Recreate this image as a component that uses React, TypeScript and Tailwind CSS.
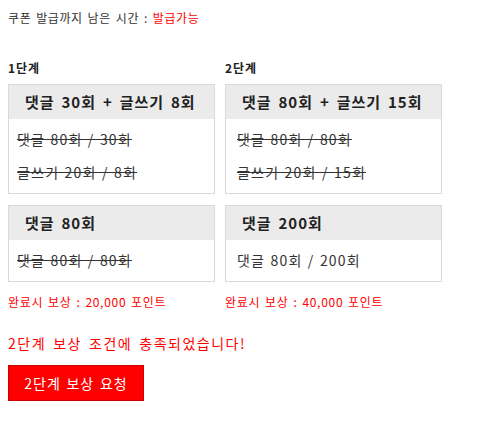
import React from "react";

const font = { fontFamily: '"Noto Sans CJK KR", "Noto Sans", sans-serif' };

function Card({
  title,
  lines,
  width,
  bodyPad,
  strike,
}: {
  title: string;
  lines: string[];
  width: string;
  bodyPad: string;
  strike: boolean[];
}) {
  return (
    <div className={`${width} border border-[#d9d9d9] bg-white`}>
      <div className="h-[34px] bg-[#ebebeb] pl-4 flex items-center text-[15px] font-bold text-[#222] tracking-[1px] [word-spacing:2.5px]">
        {title}
      </div>
      <div className={`py-[4px] ${bodyPad}`}>
        {lines.map((l, i) => (
          <div
            key={i}
            className={`h-[33px] flex items-center text-[14px] text-[#333] tracking-[1.2px] [word-spacing:1px] ${strike[i] ? "line-through" : ""}`}
          >
            {l}
          </div>
        ))}
      </div>
    </div>
  );
}

export default function App() {
  return (
    <div className="p-2 pt-2 text-[#333] bg-white min-h-[432px]" style={font}>
      <p className="text-[12px] leading-[20px] tracking-[0.6px] [word-spacing:1.6px]">
        쿠폰 발급까지 남은 시간 : <span className="text-[#ff0000]">발급가능</span>
      </p>
      <div className="mt-[32px] flex gap-[10px]">
        <div className="flex flex-col">
          <div className="text-[12px] font-bold leading-[16px] text-[#222] tracking-[1px]">1단계</div>
          <div className="mt-[8px]">
            <Card
              title="댓글 30회 + 글쓰기 8회"
              lines={["댓글 80회 / 30회", "글쓰기 20회 / 8회"]}
              width="w-[207px]"
              bodyPad="pl-2"
              strike={[true, true]}
            />
          </div>
          <div className="mt-[11px]">
            <Card
              title="댓글 80회"
              lines={["댓글 80회 / 80회"]}
              width="w-[207px]"
              bodyPad="pl-2"
              strike={[true]}
            />
          </div>
          <div className="mt-[12px] text-[12px] leading-[16px] text-[#ff0000] tracking-[0.7px] [word-spacing:1.5px]">
            완료시 보상 : 20,000 포인트
          </div>
        </div>
        <div className="flex flex-col">
          <div className="text-[12px] font-bold leading-[16px] text-[#222] tracking-[1px]">2단계</div>
          <div className="mt-[8px]">
            <Card
              title="댓글 80회 + 글쓰기 15회"
              lines={["댓글 80회 / 80회", "글쓰기 20회 / 15회"]}
              width="w-[217px]"
              bodyPad="pl-[11px]"
              strike={[true, true]}
            />
          </div>
          <div className="mt-[11px]">
            <Card
              title="댓글 200회"
              lines={["댓글 80회 / 200회"]}
              width="w-[217px]"
              bodyPad="pl-[11px]"
              strike={[false]}
            />
          </div>
          <div className="mt-[12px] text-[12px] leading-[16px] text-[#ff0000] tracking-[0.7px] [word-spacing:1.5px]">
            완료시 보상 : 40,000 포인트
          </div>
        </div>
      </div>
      <p className="mt-[23px] text-[14px] leading-[20px] text-[#ff0000] tracking-[1.5px] [word-spacing:2.5px]">
        2단계 보상 조건에 충족되었습니다!
      </p>
      <button
        className="mt-[12px] w-[136px] h-[36px] bg-[#ff0000] border border-[#cc0000] text-white text-[14px] flex items-center justify-center tracking-[1px] [word-spacing:1.5px]"
        style={font}
      >
        2단계 보상 요청
      </button>
    </div>
  );
}
